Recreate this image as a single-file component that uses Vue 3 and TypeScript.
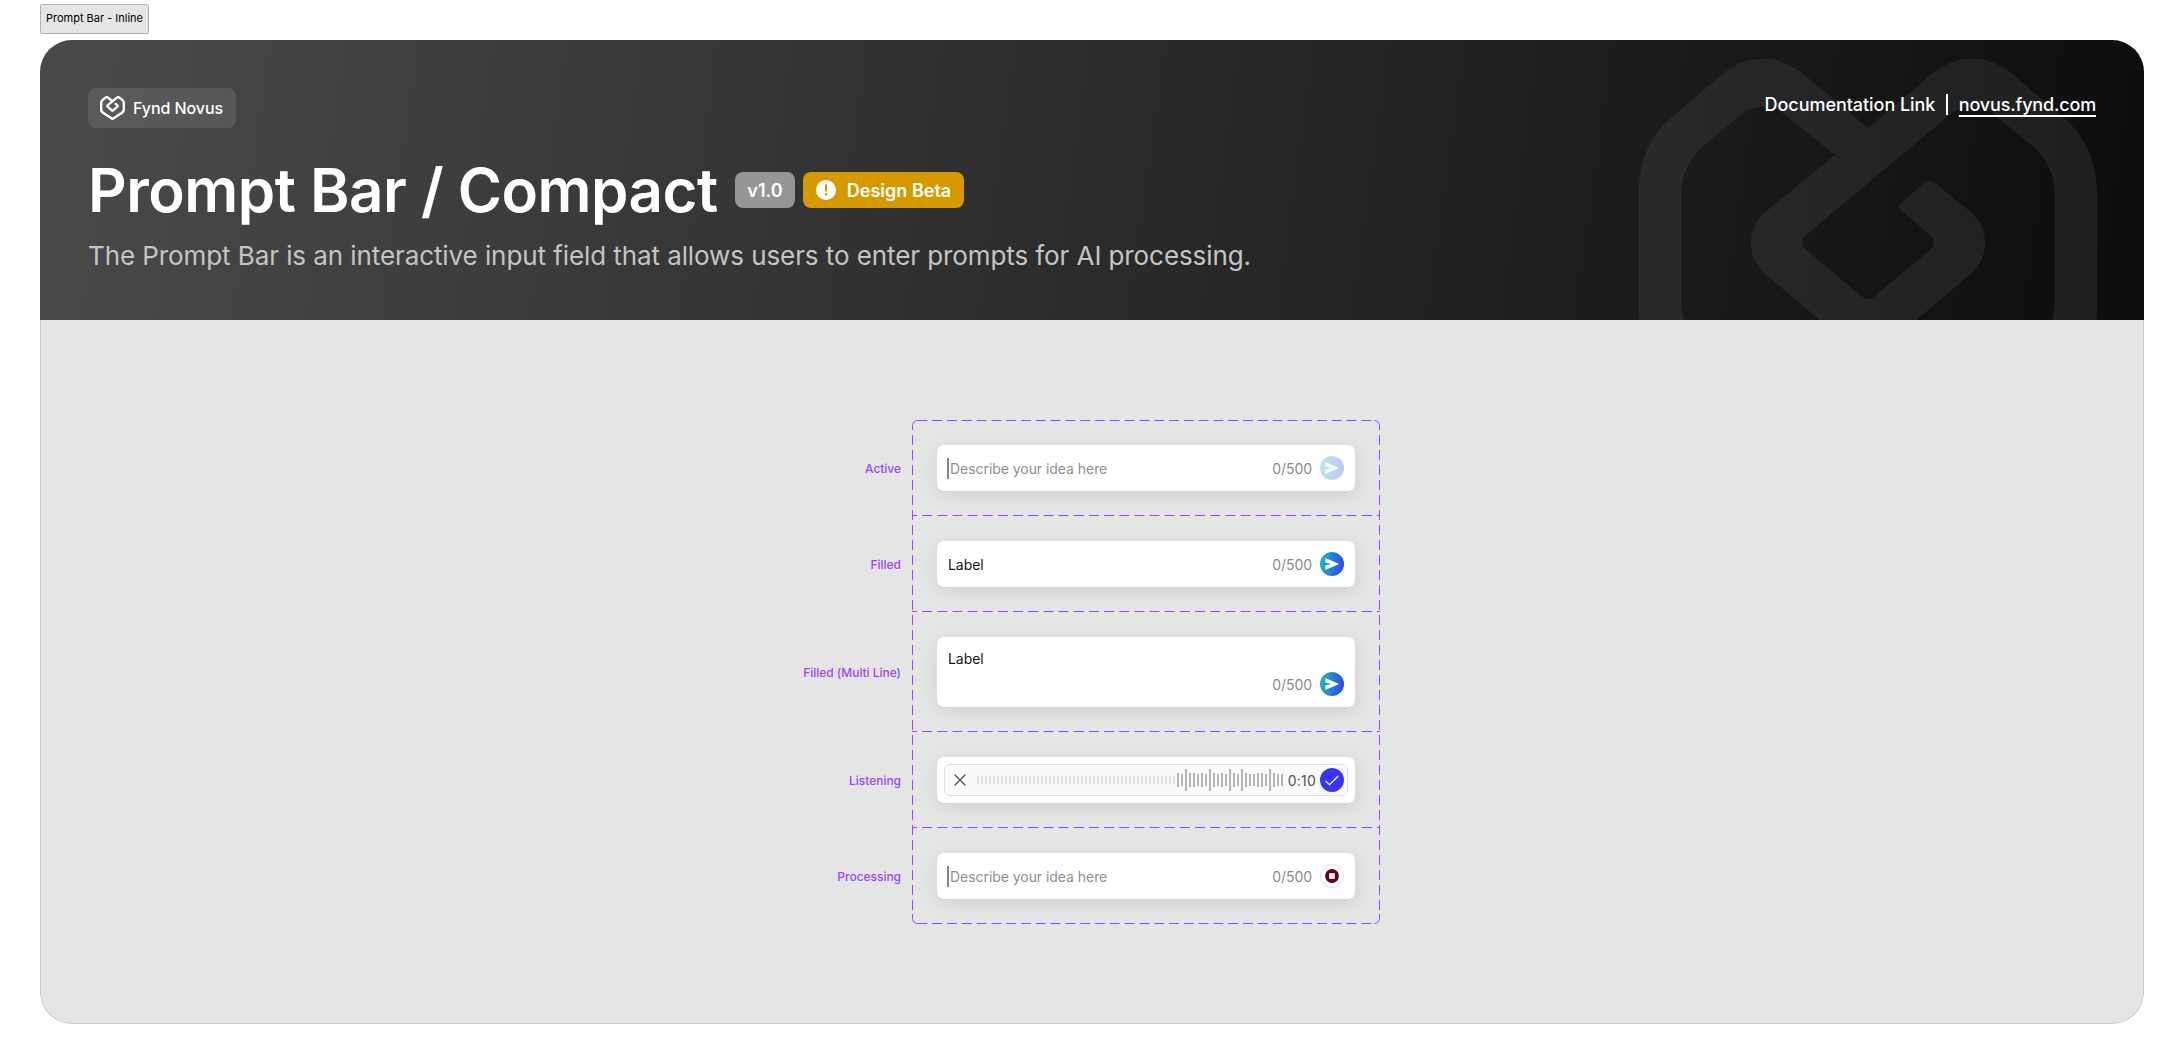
<script setup lang="ts">
interface Row {
  name: string
  kind: 'placeholder' | 'filled' | 'multi' | 'listening'
  action: 'send-off' | 'send' | 'stop' | 'check'
}

const rows: Row[] = [
  { name: 'Active', kind: 'placeholder', action: 'send-off' },
  { name: 'Filled', kind: 'filled', action: 'send' },
  { name: 'Filled (Multi Line)', kind: 'multi', action: 'send' },
  { name: 'Listening', kind: 'listening', action: 'check' },
  { name: 'Processing', kind: 'placeholder', action: 'stop' },
]

const quiet: number[] = Array.from({ length: 50 }, () => 8)
const loud: number[] = [14, 12, 22, 14, 14, 12, 14, 12, 22, 14, 12, 14, 12, 22, 14, 12, 22, 14, 12, 12, 14, 14, 12, 22, 14, 12, 12]
const dividers: number[] = [95.5, 191.5, 311.5, 407.5]

// Heart-shaped brand mark: outer silhouette plus the inner cut-out, filled with evenodd.
const mark =
  'M1 133C1 103 12 77 33 59L86 14C109 -5 141 -5 164 14L230 69L295 14C318 -5 350 -5 373 14L426 59C447 77 459 103 459 133V246' +
  'C459 285 447 300 430 315L264 428C243 443 217 443 196 428L30 315C12 300 1 285 1 246Z' +
  'M417 236V136C417 117 409 100 396 88L354 54C342 45 326 45 314 54L168 176C163 180 163 187 168 191L223 237C227 241 233 241 237 237' +
  'L292 191C297 187 297 180 292 176L264 152C260 149 260 146 264 143L286 124C290 121 293 121 297 124L335 155C351 170 351 198 335 213' +
  'L250 285C239 295 221 295 210 285L125 213C109 198 109 170 125 155L197 96L145 54C133 45 117 45 105 54L64 88C51 100 43 117 43 136V236' +
  'C43 262 48 272 62 283L215 385C224 391 236 391 245 385L398 283C412 272 417 262 417 236Z'
</script>

<template>
  <main class="page">
    <div class="tag">Prompt Bar - Inline</div>
    <section class="board">
      <header class="hero">
        <svg class="watermark" width="460" height="262" viewBox="0 0 460 262" fill="none">
          <defs>
            <linearGradient id="fold" x1="0" x2="460" y1="0" y2="0" gradientUnits="userSpaceOnUse">
              <stop offset="0" stop-color="#2a2a2a" />
              <stop offset="0.2" stop-color="#272728" />
              <stop offset="0.45" stop-color="#252528" />
              <stop offset="0.56" stop-color="#232323" />
              <stop offset="0.8" stop-color="#212121" />
              <stop offset="1" stop-color="#1e1e1e" />
            </linearGradient>
          </defs>
          <path fill="url(#fold)" fill-rule="evenodd" :d="mark" />
        </svg>
        <div class="top">
          <div class="brand">
            <svg width="25" height="24" viewBox="0 0 460 440">
              <path fill="#fff" fill-rule="evenodd" :d="mark" />
            </svg>
            <span>Fynd Novus</span>
          </div>
          <div class="links">
            <span>Documentation Link</span>
            <i class="bar"></i>
            <a>novus.fynd.com</a>
          </div>
        </div>
        <div class="title-row">
          <h1>Prompt Bar / Compact</h1>
          <span class="version">v1.0</span>
          <span class="beta">
            <svg width="20" height="20" viewBox="0 0 20 20">
              <circle cx="10" cy="10" r="10" fill="#fff" />
              <path d="M8.9 4.3h2.2v7.2H8.9zM8.9 13.2h2.2v2.3H8.9z" fill="#d69a00" />
            </svg>
            <span>Design Beta</span>
          </span>
        </div>
        <p>The Prompt Bar is an interactive input field that allows users to enter prompts for AI processing.</p>
      </header>

      <div class="stage">
        <div class="names">
          <div v-for="r in rows" :key="r.name" class="name" :class="r.kind">{{ r.name }}</div>
        </div>
        <div class="grid">
          <svg class="frame" width="468" height="504" viewBox="0 0 468 504" fill="none" stroke="#9747ff">
            <path d="M5.5 .5H462.5" stroke-dasharray="9.8 5" />
            <path d="M5.5 503.5H462.5" stroke-dasharray="9.8 5" />
            <path d="M.5 10V5.5A5 5 0 0 1 5.5 .5M462.5 .5A5 5 0 0 1 467.5 5.5V10M467.5 494V498.5A5 5 0 0 1 462.5 503.5M5.5 503.5A5 5 0 0 1 .5 498.5V494" />
            <path d="M.5 15V494M467.5 15V494" stroke-dasharray="10 5" />
            <path v-for="y in dividers" :key="y" :d="`M0 ${y}H468`" stroke-dasharray="10 5.16" stroke-dashoffset="5" />
          </svg>
          <div v-for="r in rows" :key="r.name" class="cell">
            <div class="prompt" :class="r.kind">
              <template v-if="r.kind === 'listening'">
                <div class="recorder">
                  <svg width="12" height="12" viewBox="0 0 12 12" fill="none" stroke="#4f4f4f" stroke-width="1.3" stroke-linecap="round">
                    <path d="M1 1L11 11M11 1L1 11" />
                  </svg>
                  <div class="wave">
                    <i v-for="(h, i) in quiet" :key="'q' + i" :style="{ height: h + 'px' }"></i>
                    <i v-for="(h, i) in loud" :key="'l' + i" class="loud" :style="{ height: h + 'px' }"></i>
                  </div>
                  <span class="time">0:10</span>
                  <svg width="24" height="24" viewBox="0 0 24 24" fill="none">
                    <circle cx="12" cy="12" r="12" fill="#3535f3" />
                    <path d="M5.6 12.9L9.5 16.7L18.2 8" stroke="#fff" stroke-width="1.2" />
                  </svg>
                </div>
              </template>
              <template v-else>
                <div class="text">
                  <i v-if="r.kind === 'placeholder'" class="caret"></i>
                  <span>{{ r.kind === 'placeholder' ? 'Describe your idea here' : 'Label' }}</span>
                </div>
                <div class="tools">
                  <span class="count">0/500</span>
                  <svg v-if="r.action === 'stop'" width="24" height="24" viewBox="0 0 24 24">
                    <circle cx="12" cy="12" r="11.5" fill="#fff" stroke="#e0e0e0" />
                    <circle cx="12" cy="12" r="6.9" fill="#660014" />
                    <rect x="9.2" y="9.2" width="5.6" height="5.6" fill="#fff" />
                  </svg>
                  <svg v-else :class="{ off: r.action === 'send-off' }" width="24" height="24" viewBox="0 0 24 24">
                    <defs>
                      <linearGradient id="send" x1="0" x2="24" y1="10" y2="14" gradientUnits="userSpaceOnUse">
                        <stop offset="0" stop-color="#1eb9b7" />
                        <stop offset="1" stop-color="#3343f0" />
                      </linearGradient>
                    </defs>
                    <circle cx="12" cy="12" r="12" fill="url(#send)" />
                    <path d="M5.3 6L19.2 12L5.3 18V13.4L11.4 12L5.3 10.6Z" fill="#fff" />
                  </svg>
                </div>
              </template>
            </div>
          </div>
        </div>
      </div>
    </section>
  </main>
</template>

<style>
body { margin: 0; background: #fff; }
</style>

<style scoped>
.page {
  box-sizing: border-box;
  width: 2184px;
  height: 1064px;
  padding: 4px 40px 0;
  font-family: Inter, "Liberation Sans", sans-serif;
}
.page svg { display: block; flex: none; }
.tag {
  box-sizing: border-box;
  width: 109px;
  height: 30px;
  margin-bottom: 6px;
  border: 1px solid #b3b3b3;
  border-radius: 2px;
  background: #e5e5e5;
  font-size: 11px;
  line-height: 27px;
  text-align: center;
  white-space: nowrap;
  color: #000;
}
.board {
  position: relative;
  box-sizing: border-box;
  width: 2104px;
  height: 984px;
  border-radius: 32px;
  background: #e5e5e5;
  overflow: hidden;
}
.board::after {
  content: "";
  position: absolute;
  inset: 280px 0 0;
  border: 1px solid #c9c9c9;
  border-top: 0;
  border-radius: 0 0 32px 32px;
}
.hero {
  position: relative;
  box-sizing: border-box;
  height: 280px;
  padding: 48px;
  background: linear-gradient(98deg, #4a4a4a 0%, #0d0d0d 100%);
  color: #fff;
  overflow: hidden;
}
.watermark { position: absolute; left: 1598px; top: 19px; }
.top { position: relative; display: flex; justify-content: space-between; align-items: flex-start; height: 40px; }
.brand {
  box-sizing: border-box;
  display: flex;
  align-items: center;
  gap: 8px;
  width: 148px;
  height: 40px;
  padding-left: 12px;
  border-radius: 8px;
  background: rgba(255, 255, 255, 0.1);
  font-size: 16px;
  font-weight: 500;
  letter-spacing: -0.08px;
  white-space: nowrap;
}
.links { display: flex; align-items: center; height: 33px; font-size: 18px; font-weight: 500; letter-spacing: -0.05px; }
.bar { width: 1.5px; height: 21px; margin: 0 11px; background: #fff; }
.links a { letter-spacing: -0.17px; text-decoration: underline; text-underline-offset: 4px; text-decoration-thickness: 1.5px; }
.title-row { position: relative; display: flex; align-items: center; height: 60px; margin-top: 32px; }
h1 { width: 629px; margin: 0; font-size: 60px; font-weight: 600; line-height: 60px; letter-spacing: -0.5px; white-space: nowrap; }
.version,
.beta {
  box-sizing: border-box;
  display: flex;
  align-items: center;
  justify-content: center;
  height: 36px;
  border-radius: 8px;
  font-size: 18px;
  font-weight: 600;
  white-space: nowrap;
}
.version { width: 60px; margin-left: 18px; background: #969696; }
.beta { width: 161px; margin-left: 8px; gap: 11px; background: #d69a00; }
p { position: relative; margin: 20px 0 0; font-size: 26px; font-weight: 400; line-height: 32px; letter-spacing: -0.085px; white-space: nowrap; color: #c4c4c4; }
.stage { display: flex; padding: 100px 0 0 740px; }
.names { display: flex; flex-direction: column; width: 121px; margin-right: 11px; padding-top: 1px; }
.name {
  height: 96px;
  font-size: 12px;
  font-weight: 500;
  line-height: 96px;
  letter-spacing: -0.03px;
  text-align: right;
  white-space: nowrap;
  color: #9747ff;
}
.name.multi { height: 120px; line-height: 120px; }
.grid { position: relative; width: 468px; }
.frame { position: absolute; inset: 0; }
.cell { padding: 25px; }
.prompt {
  box-sizing: border-box;
  display: flex;
  align-items: center;
  justify-content: space-between;
  height: 46px;
  padding: 0 11px;
  border-radius: 7px;
  background: #fff;
  box-shadow: 0 4px 16px rgba(0, 0, 0, 0.1);
  font-size: 14px;
  letter-spacing: -0.05px;
  color: #141414;
}
.prompt.placeholder { padding-left: 10px; color: #8f8f8f; }
.prompt.multi { flex-direction: column; align-items: stretch; height: 70px; padding: 11px; justify-content: space-between; }
.prompt.multi .text { height: 20px; }
.prompt.listening { padding: 7px; }
.text { display: flex; align-items: center; white-space: nowrap; }
.caret { width: 2px; height: 21px; margin-right: 1px; background: #858585; }
.tools { display: flex; align-items: center; justify-content: flex-end; gap: 8px; }
.count { color: #8a8a8a; }
.off { opacity: 0.3; }
.recorder {
  box-sizing: border-box;
  display: flex;
  align-items: center;
  width: 404px;
  height: 32px;
  padding: 0 3px 0 9px;
  border: 1px solid #e0e0e0;
  border-radius: 6px;
  background: #fafafa;
}
.wave { display: flex; align-items: center; gap: 2px; margin-left: 11px; }
.wave i { width: 2px; background: #e0e0e0; }
.wave i.loud { background: #b5b5b5; }
.time { margin-left: auto; margin-right: 4px; font-size: 14px; letter-spacing: 0.2px; color: #545454; }
</style>
